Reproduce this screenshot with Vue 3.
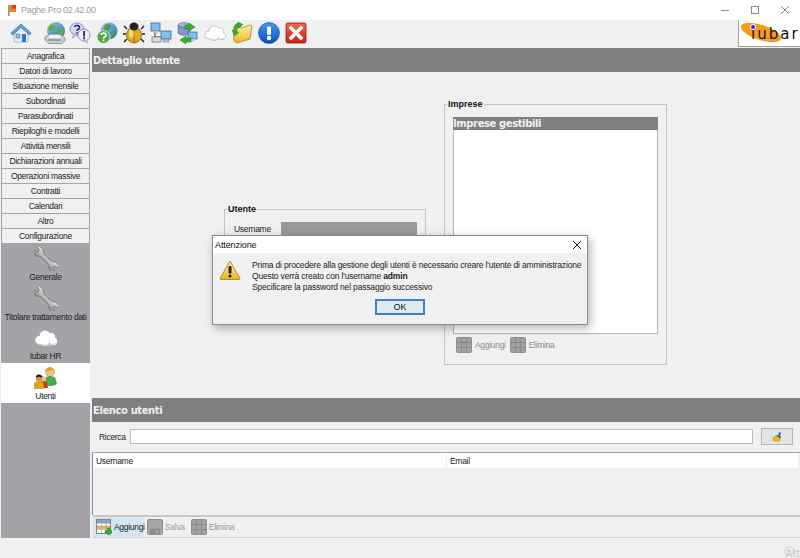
<script setup>
const navItems = ['Anagrafica', 'Datori di lavoro', 'Situazione mensile', 'Subordinati', 'Parasubordinati', 'Riepiloghi e modelli', 'Attività mensili', 'Dichiarazioni annuali', 'Operazioni massive', 'Contratti', 'Calendari', 'Altro', 'Configurazione']
const configItems = [
  { label: 'Generale', icon: '#i-wrench' },
  { label: 'Titolare trattamento dati', icon: '#i-wrench' },
  { label: 'Iubar HR', icon: '#i-cloud' },
  { label: 'Utenti', icon: '#i-users', active: true }
]
const tools = ['#i-home', '#i-fax', '#i-bubbles', '#i-helpglobe', '#i-bug', '#i-net', '#i-sync', '#i-cloud', '#i-folder', '#i-info', '#i-close']
</script>

<template>
  <div class="app">
    <svg class="defs" width="0" height="0" aria-hidden="true">
      <defs>
        <linearGradient id="g-blue" x1="0" y1="0" x2="0" y2="1"><stop offset="0" stop-color="#3f9bf0"/><stop offset="1" stop-color="#0b4fc0"/></linearGradient>
        <linearGradient id="g-red" x1="0" y1="0" x2="0" y2="1"><stop offset="0" stop-color="#f26a4a"/><stop offset="1" stop-color="#c9201a"/></linearGradient>
        <linearGradient id="g-yellow" x1="0" y1="0" x2="0" y2="1"><stop offset="0" stop-color="#fdf3a8"/><stop offset="1" stop-color="#e9b81f"/></linearGradient>
        <linearGradient id="g-globe" x1="0" y1="0" x2="1" y2="1"><stop offset="0" stop-color="#8cc9f2"/><stop offset="1" stop-color="#2a6fb5"/></linearGradient>
        <linearGradient id="g-wrench" x1="0" y1="0" x2="0" y2="1"><stop offset="0" stop-color="#e2e2e2"/><stop offset="1" stop-color="#8f8f8f"/></linearGradient>
      </defs>
      <symbol id="i-home" viewBox="0 0 22 22">
        <path d="M4 11 11 5l7 6v9H4z" fill="#e9eef5" stroke="#7f93ab" stroke-width=".6"/>
        <path d="M1 11 11 2l10 9-1.500 2L11 5.500 2.500 13z" fill="#5b9fe0" stroke="#2a5f9e" stroke-width=".6"/>
        <rect x="12" y="12" width="4" height="8" fill="#2f74c4"/>
        <rect x="6" y="12" width="4" height="4" fill="#8cc0ec" stroke="#2a5f9e" stroke-width=".5"/>
      </symbol>
      <symbol id="i-fax" viewBox="0 0 22 22">
        <circle cx="12" cy="9" r="9" fill="url(#g-globe)"/>
        <path d="M6 3c3-2 6 0 6 2s-3 2-4 4-4-1-4-2zM14 7c3-1 6 0 6 2s-2 4-4 4-3-4-2-6z" fill="#5fae4a"/>
        <path d="M1 15 6 12h10l5 4v3l-4 2.500H5L1 18z" fill="#c9cdd3" stroke="#6b6f76" stroke-width=".6"/>
        <path d="M6 13h9l3 3H4z" fill="#f3f4f6"/>
        <path d="M4 18h13" stroke="#6b6f76"/>
      </symbol>
      <symbol id="i-bubbles" viewBox="0 0 22 22">
        <ellipse cx="8" cy="7" rx="7" ry="6" fill="#d6d9f2" stroke="#6d6fa8" stroke-width=".7"/>
        <path d="M5 12 3 16l6-3z" fill="#d6d9f2" stroke="#6d6fa8" stroke-width=".5"/>
        <ellipse cx="15" cy="13" rx="6" ry="6" fill="#eceefa" stroke="#6d6fa8" stroke-width=".7"/>
        <path d="M17 18l2 3-5-3z" fill="#eceefa" stroke="#6d6fa8" stroke-width=".5"/>
        <path d="M5.500 5c.5-2 5-2 5 .5 0 2-2.500 1.500-2.500 3.500" fill="none" stroke="#26267a" stroke-width="1.500"/>
        <rect x="7.300" y="10" width="1.500" height="1.500" fill="#26267a"/>
        <rect x="14.200" y="9" width="1.800" height="5.500" fill="#26267a"/>
        <rect x="14.200" y="15.200" width="1.800" height="1.800" fill="#26267a"/>
      </symbol>
      <symbol id="i-helpglobe" viewBox="0 0 22 22">
        <circle cx="13" cy="9" r="8.500" fill="url(#g-globe)"/>
        <path d="M9 3c3-2 6-1 6 1s-3 3-4 5-3 0-3-2zM16 9c2-1 4 0 4 1s-2 4-3 4-2-3-1-5z" fill="#4d9b46"/>
        <circle cx="7.500" cy="15" r="6.500" fill="#4faa3e" stroke="#eef3ea" stroke-width=".8"/>
        <path d="M5 13c.5-2.500 5.500-2.500 5 .5-.3 1.500-2.500 1.500-2.500 3" fill="none" stroke="#fff" stroke-width="1.700"/>
        <rect x="6.600" y="17.500" width="1.800" height="1.800" fill="#fff"/>
      </symbol>
      <symbol id="i-bug" viewBox="0 0 22 22">
        <path d="M4 7 1 4M3 12H0M4 17l-3 3M18 7l3-3M19 12h3M18 17l3 3" stroke="#1a1a1a" stroke-width="1.400"/>
        <ellipse cx="11" cy="13" rx="7.500" ry="8" fill="#e3a81c" stroke="#5b4208" stroke-width=".6"/>
        <ellipse cx="9" cy="11" rx="3" ry="5" fill="#f6d868"/>
        <path d="M11 6v15" stroke="#7a5a0c" stroke-width=".7"/>
        <ellipse cx="11" cy="4.500" rx="4.500" ry="4" fill="#26221c"/>
      </symbol>
      <symbol id="i-net" viewBox="0 0 22 22">
        <path d="M5 9v6h7M16 14V11" stroke="#555" stroke-width="1.200" fill="none"/>
        <rect x="1" y="1" width="9" height="8" fill="#7fc0f2" stroke="#53606e" stroke-width=".8"/>
        <rect x="3" y="9" width="5" height="2" fill="#b9bec5"/>
        <rect x="11" y="9" width="10" height="8" fill="#7fc0f2" stroke="#53606e" stroke-width=".8"/>
        <rect x="13" y="17" width="6" height="3" fill="#b9bec5" stroke="#53606e" stroke-width=".4"/>
        <rect x="2" y="15" width="9" height="5" fill="#d9dce0" stroke="#53606e" stroke-width=".6"/>
      </symbol>
      <symbol id="i-sync" viewBox="0 0 22 22">
        <ellipse cx="7" cy="3" rx="6" ry="2.500" fill="#a6b4d6" stroke="#55608a" stroke-width=".5"/>
        <path d="M1 3v8c0 3 12 3 12 0V3c0 3-12 3-12 0z" fill="#8594c0" stroke="#55608a" stroke-width=".5"/>
        <rect x="11" y="10" width="9" height="7" fill="#7fc0f2" stroke="#53606e" stroke-width=".7"/>
        <rect x="13" y="17" width="5" height="2.500" fill="#c2c6cc"/>
        <path d="M12 1l6 4-6 4V7H8V3h4zM9 22l-6-4 6-4v2h5v4H9z" fill="#35b02f" stroke="#1f6e1d" stroke-width=".5"/>
      </symbol>
      <symbol id="i-cloud" viewBox="0 0 22 22">
        <g fill="#b8bbc0" stroke="#a4a7ac" stroke-width=".8">
          <circle cx="5" cy="13" r="4"/><circle cx="10" cy="9" r="5"/><circle cx="15.500" cy="10" r="4"/><circle cx="17.500" cy="14" r="3.800"/><circle cx="10" cy="14.500" r="4"/>
        </g>
        <g fill="#fff">
          <circle cx="5" cy="13" r="3.800"/><circle cx="10" cy="9" r="4.800"/><circle cx="15.500" cy="10" r="3.800"/><circle cx="17.500" cy="14" r="3.600"/><circle cx="10" cy="14.500" r="3.800"/>
        </g>
        <path d="M3 16c4 2 13 2 17 0" fill="none" stroke="#d2d4d8"/>
      </symbol>
      <symbol id="i-folder" viewBox="0 0 22 22">
        <path d="M2 8 9 5l2 1 8-3 2 1-2 13-13 4-3-2z" fill="url(#g-yellow)" stroke="#8f7a27" stroke-width=".7"/>
        <path d="M7 1C4 2 2 5 3 9L1 8l3 6 4-4-2 0C5.500 8 6 6 8 5z" fill="#35b02f" stroke="#1f6e1d" stroke-width=".4"/>
        <path d="M7 0l5 2.500L8 6z" fill="#35b02f" stroke="#1f6e1d" stroke-width=".4"/>
      </symbol>
      <symbol id="i-info" viewBox="0 0 22 22">
        <circle cx="11" cy="11" r="10.500" fill="url(#g-blue)" stroke="#0a3f9c" stroke-width=".6"/>
        <rect x="9" y="4.500" width="4" height="8.500" rx="1" fill="#fff"/>
        <circle cx="11" cy="16" r="2.200" fill="#fff"/>
      </symbol>
      <symbol id="i-close" viewBox="0 0 22 22">
        <rect x="1" y="1" width="20" height="20" rx="2" fill="url(#g-red)" stroke="#8e1410" stroke-width=".8"/>
        <path d="M6 3.500 11 8.500l5-5 2.500 2.500-5 5 5 5-2.500 2.500-5-5-5 5L3.500 16l5-5-5-5z" fill="#fff"/>
      </symbol>
      <symbol id="i-wrench" viewBox="0 0 24 24">
        <path transform="rotate(45 12 12)" d="M-3.300 9.500 1 10.800v2.400l-4.300 1.300A5 5 0 0 0 4.500 15.500L7 14.200h10l2.500 1.300A5 5 0 0 0 27.300 14.500L23 13.200v-2.400l4.300-1.300A5 5 0 0 0 19.500 8.500L17 9.800H7L4.500 8.500A5 5 0 0 0-3.300 9.500z" fill="url(#g-wrench)" stroke="#6a6a6a" stroke-width=".7"/>
      </symbol>
      <symbol id="i-users" viewBox="0 0 24 24">
        <circle cx="16" cy="6" r="4.500" fill="#f3c48a" stroke="#a87437" stroke-width=".5"/>
        <path d="M16 1.500c-3 0-4.500 2-4.500 3.500 2 0 6-.5 8-1-.5-1.500-2-2.500-3.500-2.500z" fill="#e0a018"/>
        <path d="M11 12c3-2 7-2 10 0l1.500 6c-3 2-9 2-12 1z" fill="#42b04e" stroke="#257a30" stroke-width=".5"/>
        <circle cx="9" cy="13" r="3" fill="#f3c48a"/>
        <path d="M6 16c2-1 5-1 7 0l1 6H6z" fill="#c63a22"/>
        <circle cx="5" cy="12" r="3.300" fill="#c8914f"/>
        <path d="M1.800 11.500c0-4 6.500-4 6.500 0-2-1-4.500-1-6.500 0z" fill="#1c1c1c"/>
        <path d="M.5 17c2-2 7-2 9 0l.5 5.500H.5z" fill="#e0a410" stroke="#8a650c" stroke-width=".4"/>
      </symbol>
      <symbol id="i-grid" viewBox="0 0 16 16">
        <rect x=".5" y=".5" width="15" height="15" rx="1" fill="#a2a2a2" stroke="#8e8e8e"/>
        <path d="M5.500 1v14M10.500 1v14M1 5.500h14M1 10.500h14" stroke="#8a8a8a"/>
      </symbol>
      <symbol id="i-disk" viewBox="0 0 16 16">
        <rect x=".5" y=".5" width="15" height="15" rx="1.500" fill="#a5a5a5" stroke="#8e8e8e"/>
        <rect x="3" y="9.500" width="10" height="6" fill="#8c8c8c"/>
        <rect x="9" y="11" width="2" height="3" fill="#b0b0b0"/>
      </symbol>
      <symbol id="i-addtable" viewBox="0 0 16 16">
        <rect x=".5" y=".5" width="14" height="14" fill="#fff" stroke="#7d8792"/>
        <rect x="1" y="1" width="13" height="3" fill="#8fa0b4"/>
        <rect x="1" y="7" width="13" height="3" fill="#f4b24a"/>
        <path d="M5.500 1v13M10 1v13M1 4.500h13M1 7h13M1 10.500h13" stroke="#9aa3ae" stroke-width=".6"/>
        <path d="M11.500 9h2.500v2.500H16.500v2.500H14v2.500h-2.500V14H9v-2.500h2.500z" fill="#35b02f" stroke="#1c7a19" stroke-width=".4"/>
      </symbol>
      <symbol id="i-brush" viewBox="0 0 18 14">
        <path d="M11 1l3 1-2 4 2 1.500c0 1.500-1 2-2 2L6.500 7.500 8 5l2 .5z" fill="#1f55c8"/>
        <path d="M3 9c1-2 3-3 4-3l6 3c0 2-.5 4-2 4.500H4C3 13 2 11 3 9z" fill="#eeb416" stroke="#96700c" stroke-width=".4"/>
      </symbol>
    </svg>

    <header class="titlebar">
      <svg class="flag" width="9" height="11" viewBox="0 0 9 11"><rect width="1.500" height="11" fill="#9c8a7a"/><path d="M1.500 0H8v7H1.500z" fill="#ef7a2a"/><path d="M4 0h4v3.500H4z" fill="#e23a1c"/></svg>
      <span class="apptitle">Paghe Pro 02.42.00</span>
      <div class="winctl">
        <svg width="10" height="10" viewBox="0 0 10 10"><path d="M1 5.500h8" stroke="#8a8a8a"/></svg>
        <svg width="10" height="10" viewBox="0 0 10 10"><rect x="1.500" y="1.500" width="7" height="7" fill="none" stroke="#8a8a8a"/></svg>
        <svg width="10" height="10" viewBox="0 0 10 10"><path d="M1 1l8 8M9 1 1 9" stroke="#8a8a8a"/></svg>
      </div>
    </header>

    <div class="toolbar">
      <div class="tools">
        <svg v-for="(t, i) in tools" :key="i" class="tool" :class="{ first: i === 0, second: i === 1 }" width="22" height="22"><use :href="t"/></svg>
      </div>
      <div class="logo">
        <span class="blob"></span>
        <span class="logotext">iubar</span>
        <span class="dot"></span>
      </div>
    </div>

    <div class="main">
      <aside class="sidebar">
        <div v-for="n in navItems" :key="n" class="navbtn">{{ n }}</div>
        <div class="configlist">
          <div v-for="c in configItems" :key="c.label" class="configitem" :class="{ active: c.active }">
            <svg width="24" height="24"><use :href="c.icon"/></svg>
            <span>{{ c.label }}</span>
          </div>
        </div>
      </aside>

      <div class="content">
        <div class="sectionbar">Dettaglio utente</div>
        <div class="detail">
          <fieldset class="group utente">
            <legend>Utente</legend>
            <div class="formrow">
              <label>Username</label>
              <div class="fakeinput"></div>
            </div>
          </fieldset>
          <fieldset class="group imprese">
            <legend>Imprese</legend>
            <div class="listbox">
              <div class="listhead">Imprese gestibili</div>
            </div>
            <div class="listactions">
              <svg width="16" height="16"><use href="#i-grid"/></svg>
              <span>Aggiungi</span>
              <svg width="16" height="16"><use href="#i-grid"/></svg>
              <span>Elimina</span>
            </div>
          </fieldset>
        </div>
        <div class="sectionbar">Elenco utenti</div>
        <div class="searchrow">
          <span class="searchlabel">Ricerca</span>
          <div class="searchinput"></div>
          <button class="brushbtn"><svg width="13" height="11"><use href="#i-brush"/></svg></button>
        </div>
        <div class="table">
          <div class="thead">
            <div class="th first">Username</div>
            <div class="th">Email</div>
          </div>
        </div>
        <div class="bottombar">
          <div class="bbtn hover"><svg width="16" height="16"><use href="#i-addtable"/></svg><span>Aggiungi</span></div>
          <div class="bbtn off"><svg width="16" height="16"><use href="#i-disk"/></svg><span>Salva</span></div>
          <div class="bbtn off"><svg width="16" height="16"><use href="#i-grid"/></svg><span>Elimina</span></div>
        </div>
      </div>
    </div>
    <footer class="status"></footer>

    <div class="watermark">Att</div>

    <div class="dialog">
      <div class="dtitle">
        <span>Attenzione</span>
        <svg width="10" height="10" viewBox="0 0 10 10"><path d="M1 1l8 8M9 1 1 9" stroke="#222" stroke-width="1"/></svg>
      </div>
      <div class="dbody">
        <svg class="warn" width="22" height="20" viewBox="0 0 22 20">
          <path d="M11 1 21 18.500c0 .5-.5 1-1 1H2c-.5 0-1-.5-1-1z" fill="url(#g-yellow)" stroke="#a88f3a" stroke-linejoin="round"/>
          <rect x="9.500" y="6" width="3" height="7.500" rx="1" fill="#222"/>
          <circle cx="11" cy="16" r="1.600" fill="#222"/>
        </svg>
        <div class="dtext">
          <p>Prima di procedere alla gestione degli utenti è necessario creare l'utente di amministrazione</p>
          <p>Questo verrà creato con l'username <b>admin</b></p>
          <p>Specificare la password nel passaggio successivo</p>
        </div>
      </div>
      <div class="dfoot"><button class="okbtn">OK</button></div>
    </div>
  </div>
</template>

<style>
html, body { margin: 0; padding: 0; background: #f0f0f0; }
</style>

<style scoped>
.app {
  position: relative;
  width: 800px;
  height: 558px;
  overflow: hidden;
  background: #f0f0f0;
  font-family: "Liberation Sans", Arial, sans-serif;
  font-size: 8.500px;
  letter-spacing: -.3px;
  color: #222;
  display: flex;
  flex-direction: column;
}
.defs { position: absolute; }
.titlebar {
  height: 20px;
  background: #fff;
  display: flex;
  align-items: center;
  padding-left: 8px;
  flex: none;
}
.flag { margin-right: 4px; }
.apptitle { font-size: 9px; letter-spacing: -.3px; color: #9a9a9a; }
.winctl {
  margin-left: auto;
  display: flex;
  gap: 20px;
  padding-right: 10px;
}
.toolbar {
  height: 28px;
  flex: none;
  display: flex;
  justify-content: space-between;
  box-sizing: border-box;
}
.tools { display: flex; align-items: center; gap: 5px; padding: 0 0 2px 10px; }
.tool.first { margin-right: 7px; }
.tool.second { margin-right: -2px; }
.logo {
  position: relative;
  width: 62px;
  height: 27px;
  background: #fff;
  border-left: 1px solid #a0a0a0;
  border-bottom: 1px solid #a0a0a0;
  box-sizing: border-box;
  overflow: hidden;
}
.blob {
  position: absolute;
  left: 1px; top: 5px;
  width: 42px; height: 15px;
  background: #f79a1f;
  border-radius: 50%;
  transform: rotate(18deg);
}
.dot {
  position: absolute;
  left: 11px; top: 4px;
  width: 4px; height: 4px;
  border-radius: 50%;
  background: #1a35c8;
  border: 1px solid #fff;
}
.logotext {
  position: absolute;
  left: 12px; top: 2px;
  font-family: "DejaVu Sans", sans-serif;
  font-size: 15px;
  letter-spacing: 2px;
  line-height: 24px;
  color: #111;
}
.main { flex: 1; display: flex; min-height: 0; }
.sidebar {
  width: 89px;
  margin-left: 1px;
  background: #a3a3a8;
  flex: none;
  display: flex;
  flex-direction: column;
  padding-top: 1px;
  box-sizing: border-box;
}
.navbtn {
  height: 14px;
  margin: 0 1px 1px;
  background: #f0f0f0;
  text-align: center;
  line-height: 15px;
  flex: none;
  white-space: nowrap;
}
.configlist { display: flex; flex-direction: column; }
.configitem {
  height: 39.670px;
  display: flex;
  flex-direction: column;
  align-items: center;
  padding-top: 3px;
  box-sizing: border-box;
  white-space: nowrap;
  line-height: 12px;
}
.configitem svg { flex: none; }
.configitem.active { background: #fff; height: 40px; }
.content {
  margin-left: 2px;
  flex: 1;
  min-width: 0;
  display: flex;
  flex-direction: column;
}
.sectionbar {
  height: 24px;
  flex: none;
  background: #808080;
  color: #f0f0f0;
  font-family: "DejaVu Sans", sans-serif;
  font-weight: 700;
  font-size: 10px;
  letter-spacing: -.4px;
  line-height: 25px;
  padding-left: 1px;
}
.detail {
  height: 326px;
  flex: none;
  display: flex;
  align-items: flex-start;
  gap: 18px;
  padding-left: 132px;
  box-sizing: border-box;
}
.group {
  margin: 0;
  padding: 0;
  border: 1px solid #c4c4c4;
  min-width: 0;
  box-sizing: border-box;
}
.group legend {
  margin-left: 2px;
  padding: 0 1px;
  font-family: "Liberation Sans", sans-serif;
  font-size: 9px;
  font-weight: 700;
  color: #111;
  line-height: 10px;
  letter-spacing: 0;
}
.utente { width: 202px; height: 118px; margin-top: 132px; flex: none; }
.formrow { display: flex; align-items: flex-start; padding: 8px 0 0 9px; }
.formrow label { width: 47px; line-height: 14px; flex: none; }
.fakeinput { width: 136px; height: 28px; background: #999; }
.imprese { width: 223px; height: 266px; margin-top: 27px; flex: none; }
.listbox {
  margin: 8px 8px 0;
  height: 217px;
  background: #fff;
  border: 1px solid #b4b4b8;
  border-top: 0;
  box-sizing: border-box;
}
.listhead {
  height: 13px;
  margin: 0 -1px;
  background: #808080;
  color: #f0f0f0;
  font-family: "DejaVu Sans", sans-serif;
  font-weight: 700;
  font-size: 10px;
  letter-spacing: -.4px;
  line-height: 14px;
  white-space: nowrap;
}
.listactions {
  display: flex;
  align-items: center;
  padding: 3px 0 0 11px;
  color: #8c8c8c;
}
.listactions svg { flex: none; }
.listactions span { margin: 0 4px 0 3px; }
.searchrow {
  height: 30px;
  flex: none;
  display: flex;
  align-items: center;
  box-sizing: border-box;
  padding: 0 7px 1px 7px;
}
.searchlabel { width: 31px; flex: none; }
.searchinput {
  flex: 1;
  height: 15px;
  background: #fff;
  border: 1px solid #bdbdbd;
  box-sizing: border-box;
}
.brushbtn {
  width: 32px;
  height: 17px;
  margin-left: 8px;
  padding: 0;
  background: #e3e3e3;
  border: 1px solid #b5b5b5;
  display: flex;
  align-items: center;
  justify-content: center;
  flex: none;
}
.table {
  height: 63px;
  flex: none;
  border-top: 1px solid #a4a4ac;
  border-left: 1px solid #8a8a8e;
  box-sizing: border-box;
}
.thead { display: flex; height: 15px; gap: 1px; padding-right: 2px; }
.th {
  flex: 1;
  background: #fff;
  line-height: 16px;
  padding-left: 3px;
}
.th.first { flex: none; box-sizing: border-box; width: 353px; }
.bottombar {
  height: 23px;
  flex: none;
  display: flex;
  align-items: stretch;
  margin-left: 1px;
  border-top: 2px solid #c8c8c8;
  border-bottom: 1px solid #d4d4d4;
  box-sizing: border-box;
}
.bbtn { display: flex; align-items: center; gap: 2px; padding: 0 3px; }
.bbtn svg { flex: none; }
.bbtn.hover { background: #d6e5f3; width: 51px; box-sizing: border-box; color: #1c1c1c; }
.bbtn.off { color: #9a9a9a; }
.status { height: 20px; flex: none; }
.watermark {
  position: absolute;
  left: 785px;
  top: 547px;
  font-size: 11px;
  color: #c8c8c8;
  line-height: 12px;
  letter-spacing: .5px;
}
.watermark::before {
  content: "";
  position: absolute;
  left: -1px;
  top: -1px;
  width: 8px;
  height: 8px;
  border: 1px solid #d4d4d4;
  border-radius: 50%;
}
.dialog {
  position: absolute;
  left: 212px;
  top: 235px;
  width: 376px;
  height: 90px;
  box-sizing: border-box;
  background: #f0f0f0;
  border: 1px solid #8a8a8a;
  box-shadow: 2px 3px 9px rgba(0, 0, 0, .3);
  display: flex;
  flex-direction: column;
}
.dtitle {
  height: 17px;
  flex: none;
  background: #fff;
  display: flex;
  align-items: center;
  justify-content: space-between;
  padding: 0 5px 0 2px;
  font-size: 9px;
  letter-spacing: -.1px;
  color: #111;
}
.dbody { display: flex; align-items: flex-start; padding: 7px 0 0 6px; }
.warn { margin-right: 11px; flex: none; }
.dtext { line-height: 11px; font-size: 8.500px; letter-spacing: -.17px; white-space: nowrap; }
.dtext p { margin: 0; }
.dtext b { font-weight: 700; }
.dfoot { display: flex; justify-content: center; padding-top: 6px; }
.okbtn {
  width: 50px;
  height: 16px;
  padding: 0;
  background: #e1e9f3;
  border: 2px solid #3c82c8;
  box-sizing: border-box;
  font-family: inherit;
  font-size: 9px;
  color: #111;
  line-height: 11px;
}
</style>
